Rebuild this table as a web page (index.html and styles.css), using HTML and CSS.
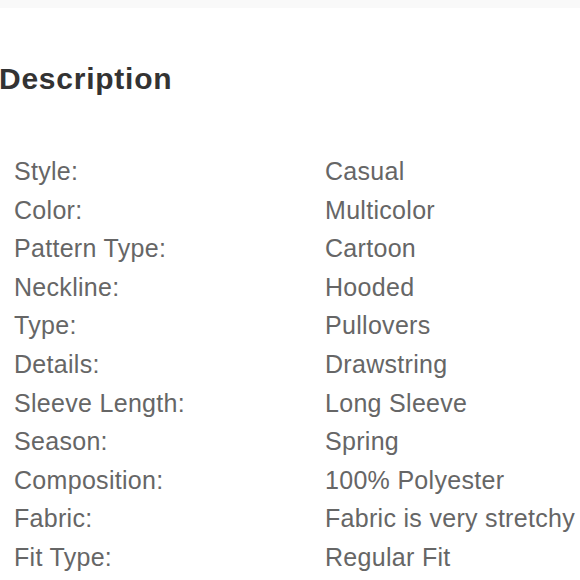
FILE: index.html
```html
<!DOCTYPE html>
<html>
<head>
<meta charset="utf-8">
<link rel="stylesheet" href="styles.css">
</head>
<body>
<div class="topbar"></div>
<section class="desc">
  <h2 class="desc-title">Description</h2>
  <dl class="specs">
    <div class="row"><dt>Style:</dt><dd>Casual</dd></div>
    <div class="row"><dt>Color:</dt><dd>Multicolor</dd></div>
    <div class="row"><dt>Pattern Type:</dt><dd>Cartoon</dd></div>
    <div class="row"><dt>Neckline:</dt><dd>Hooded</dd></div>
    <div class="row"><dt>Type:</dt><dd>Pullovers</dd></div>
    <div class="row"><dt>Details:</dt><dd>Drawstring</dd></div>
    <div class="row"><dt>Sleeve Length:</dt><dd>Long Sleeve</dd></div>
    <div class="row"><dt>Season:</dt><dd>Spring</dd></div>
    <div class="row"><dt>Composition:</dt><dd>100% Polyester</dd></div>
    <div class="row"><dt>Fabric:</dt><dd>Fabric is very stretchy</dd></div>
    <div class="row"><dt>Fit Type:</dt><dd>Regular Fit</dd></div>
  </dl>
</section>
</body>
</html>
```
FILE: styles.css
```css
html, body {
  margin: 0;
  padding: 0;
  background: #ffffff;
  font-family: "Liberation Sans", Arial, sans-serif;
  overflow: hidden;
}
.topbar {
  height: 8px;
  background: #f9f9f9;
}
.desc {
  padding-top: 56px;
}
.desc-title {
  margin: 0;
  font-size: 30px;
  line-height: 30px;
  font-weight: bold;
  color: #333333;
  letter-spacing: 0.75px;
  margin-left: -1px;
}
.specs {
  margin: 58px 0 0 0;
  padding: 0;
}
.row {
  display: grid;
  grid-template-columns: 311px 1fr;
  padding-left: 14px;
  font-size: 25px;
  line-height: 38.6px;
  color: #666666;
  letter-spacing: 0.3px;
}
.row dt, .row dd {
  margin: 0;
  white-space: nowrap;
}
```
